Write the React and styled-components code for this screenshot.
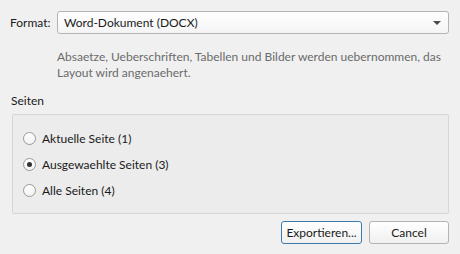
import { useState } from 'react';
import styled, { createGlobalStyle } from 'styled-components';

const Global = createGlobalStyle`
    html, body {
        margin: 0;
        padding: 0;
        background: #f0f0f0;
    }
    body {
        font-family: Lato, "Open Sans", sans-serif;
        font-size: 12px;
        color: #1a1a1a;
    }
`;

const Dialog = styled.div`
    width: 460px;
    height: 254px;
    box-sizing: border-box;
    padding: 11px 11px 0 10px;
    display: flex;
    flex-direction: column;
`;

const FormatRow = styled.div`
    display: flex;
    align-items: center;
    height: 23px;
`;

const Label = styled.label`
    width: 47px;
    line-height: 16px;
`;

const Combo = styled.div`
    flex: 1;
    height: 23px;
    box-sizing: border-box;
    border: 1px solid #b4b4b4;
    border-radius: 3px;
    background: linear-gradient(#ffffff, #f4f4f4);
    display: flex;
    align-items: center;
    justify-content: space-between;
    padding: 0 7px 0 6px;
`;

const Arrow = styled.span`
    width: 0;
    height: 0;
    border-left: 4px solid transparent;
    border-right: 4px solid transparent;
    border-top: 4px solid #4a4a4a;
`;

const Description = styled.p`
    margin: 15px 0 0 47px;
    color: #6b6b6b;
    line-height: 16px;
    white-space: nowrap;
`;

const SectionTitle = styled.div`
    margin: 12px 0 0 1px;
    line-height: 16px;
`;

const Group = styled.div`
    margin: 5px 0 0 2px;
    height: 100px;
    box-sizing: border-box;
    border: 1px solid #d6d6d6;
    border-radius: 2px;
    background: #ececec;
    padding: 16px 0 0 10px;
    display: flex;
    flex-direction: column;
    gap: 12px;
`;

const Option = styled.label`
    display: flex;
    align-items: center;
    gap: 6px;
    height: 14px;
    cursor: default;
`;

const Circle = styled.span`
    width: 13px;
    height: 13px;
    box-sizing: border-box;
    border-radius: 50%;
    border: 1px solid #9a9a9a;
    background: linear-gradient(#ffffff, #f3f3f3);
    display: flex;
    align-items: center;
    justify-content: center;

    &::after {
        content: '';
        width: 5px;
        height: 5px;
        border-radius: 50%;
        background: ${({ $checked }) => ($checked ? '#333' : 'transparent')};
    }
`;

const Footer = styled.div`
    margin-top: 7px;
    display: flex;
    justify-content: flex-end;
    gap: 7px;
`;

const Button = styled.button`
    width: ${({ $w }) => $w}px;
    height: 23px;
    box-sizing: border-box;
    font: inherit;
    color: #1a1a1a;
    border: 1px solid ${({ $default }) => ($default ? '#3d7bad' : '#b4b4b4')};
    border-radius: 3px;
    background: linear-gradient(#ffffff, #f0f0f0);
    padding: 0;
`;

const options = [
    'Aktuelle Seite (1)',
    'Ausgewaehlte Seiten (3)',
    'Alle Seiten (4)',
];

export default function App() {
    const [selected, setSelected] = useState(1);

    return (
        <>
            <Global />
            <Dialog>
                <FormatRow>
                    <Label>Format:</Label>
                    <Combo>
                        <span>Word-Dokument (DOCX)</span>
                        <Arrow />
                    </Combo>
                </FormatRow>

                <Description>
                    Absaetze, Ueberschriften, Tabellen und Bilder werden uebernommen, das
                    <br />
                    Layout wird angenaehert.
                </Description>

                <SectionTitle>Seiten</SectionTitle>
                <Group>
                    {options.map((text, i) => (
                        <Option key={text} onClick={() => setSelected(i)}>
                            <Circle $checked={selected === i} />
                            {text}
                        </Option>
                    ))}
                </Group>

                <Footer>
                    <Button $w={81} $default>Exportieren...</Button>
                    <Button $w={80}>Cancel</Button>
                </Footer>
            </Dialog>
        </>
    );
}
